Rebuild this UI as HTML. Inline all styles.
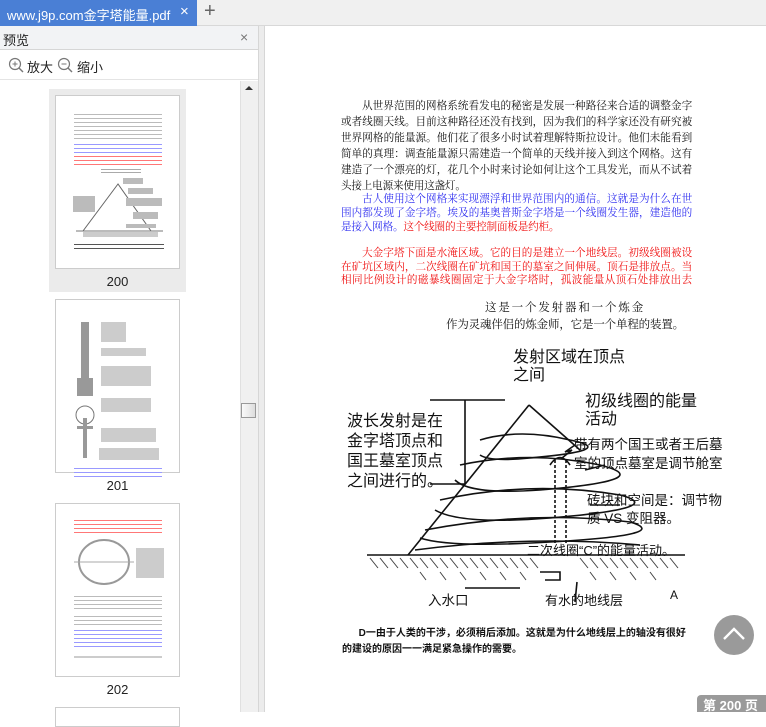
<!DOCTYPE html>
<html><head><meta charset="utf-8"><style>
*{margin:0;padding:0;box-sizing:border-box}
body{width:766px;height:712px;overflow:hidden;background:#fff;font-family:"Liberation Sans","Noto Sans CJK SC",sans-serif;position:relative}
.a{position:absolute}
.l{position:absolute;left:341px;width:351px;font-family:"Liberation Serif","Noto Serif CJK SC",serif;font-size:10.6px;letter-spacing:-0.2px;line-height:16px;height:16px;text-align:justify;text-align-last:justify;overflow:hidden;color:#111}
.i{left:362px;width:330px}
.b{color:#3030f0}.r{color:#f01010}
.d{font-family:"Liberation Sans","Noto Sans CJK SC",sans-serif;font-size:16px;line-height:20px;color:#111;position:absolute;white-space:nowrap}
.th{position:absolute;left:55px;width:125px;background:#fff;border:1px solid #ccc}
.tl{position:absolute;height:1px}
.lab{position:absolute;left:55px;width:125px;text-align:center;font-size:13px;color:#222}
</style></head><body>
<div class="a" style="left:0;top:0;width:766px;height:26px;background:#f0f0f0;border-bottom:1px solid #d8d8d8"></div>
<div class="a" style="left:0;top:0;width:197px;height:26px;background:#4a7fd5"></div>
<div class="a" style="left:7px;top:5px;font-size:13px;color:#fff;white-space:nowrap">www.j9p.com金字塔能量.pdf</div>
<div class="a" style="left:180px;top:3px;font-size:15px;color:#fff">×</div>
<div class="a" style="left:204px;top:0px;font-size:20px;color:#666">+</div>
<div class="a" style="left:0;top:26px;width:258px;height:24px;background:#f2f3f5;border-bottom:1px solid #d6d6d6"></div>
<div class="a" style="left:3px;top:30px;font-size:13px;color:#222">预览</div>
<div class="a" style="left:240px;top:29px;font-size:14px;color:#777">×</div>
<div class="a" style="left:0;top:50px;width:258px;height:30px;background:#fff;border-bottom:1px solid #e4e4e4"></div>
<svg class="a" style="left:8px;top:57px" width="16" height="16"><circle cx="7" cy="7" r="5.5" fill="none" stroke="#777" stroke-width="1.2"/><line x1="11" y1="11" x2="15" y2="15" stroke="#777" stroke-width="1.4"/><line x1="4.5" y1="7" x2="9.5" y2="7" stroke="#777"/><line x1="7" y1="4.5" x2="7" y2="9.5" stroke="#777"/></svg>
<div class="a" style="left:27px;top:57px;font-size:13px;color:#222">放大</div>
<svg class="a" style="left:57px;top:57px" width="16" height="16"><circle cx="7" cy="7" r="5.5" fill="none" stroke="#777" stroke-width="1.2"/><line x1="11" y1="11" x2="15" y2="15" stroke="#777" stroke-width="1.4"/><line x1="4.5" y1="7" x2="9.5" y2="7" stroke="#777"/></svg>
<div class="a" style="left:77px;top:57px;font-size:13px;color:#222">缩小</div>
<div class="a" style="left:240px;top:81px;width:18px;height:631px;background:#f0f0f0;border-left:1px solid #e0e0e0"></div>
<div class="a" style="left:245px;top:86px;width:0;height:0;border-left:4px solid transparent;border-right:4px solid transparent;border-bottom:4px solid #333"></div>
<div class="a" style="left:241px;top:403px;width:15px;height:15px;background:linear-gradient(90deg,#fafafa,#ddd);border:1px solid #999"></div>
<div class="a" style="left:258px;top:26px;width:7px;height:686px;background:#ececec;border-left:1px solid #d6d6d6;border-right:1px solid #d6d6d6"></div>
<div class="a" style="left:49px;top:89px;width:137px;height:203px;background:#ebebeb"></div>
<div class="th" style="top:95px;height:174px">
 <div class="tl" style="left:18px;top:18px;width:88px;height:26px;background:repeating-linear-gradient(#bbb 0 1px,transparent 1px 4px)"></div>
 <div class="tl" style="left:18px;top:48px;width:88px;height:10px;background:repeating-linear-gradient(#99f 0 1px,transparent 1px 4px)"></div>
 <div class="tl" style="left:18px;top:60px;width:88px;height:10px;background:repeating-linear-gradient(#f77 0 1px,transparent 1px 4px)"></div>
 <div class="tl" style="left:45px;top:73px;width:40px;height:6px;background:repeating-linear-gradient(#aaa 0 1px,transparent 1px 3px)"></div>
 <svg class="a" style="left:15px;top:80px" width="95" height="65"><polygon points="47,8 12,55 80,55" fill="none" stroke="#666"/><line x1="5" y1="55" x2="92" y2="55" stroke="#777"/><g fill="#bbb"><rect x="2" y="20" width="22" height="16"/><rect x="52" y="2" width="20" height="6"/><rect x="57" y="12" width="25" height="6"/><rect x="55" y="22" width="36" height="8"/><rect x="62" y="36" width="25" height="7"/><rect x="55" y="48" width="30" height="4"/></g><rect x="12" y="56" width="75" height="5" fill="#ccc"/></svg>
 <div class="tl" style="left:18px;top:148px;width:90px;height:8px;background:repeating-linear-gradient(#555 0 1px,transparent 1px 4px)"></div>
</div>
<div class="lab" style="top:274px">200</div>
<div class="th" style="top:299px;height:174px">
 <svg class="a" style="left:15px;top:18px" width="95" height="150"><g fill="#999"><rect x="10" y="4" width="8" height="60"/><rect x="6" y="60" width="16" height="18"/><circle cx="14" cy="97" r="9" fill="none" stroke="#777"/><rect x="12" y="100" width="4" height="40"/><rect x="6" y="108" width="16" height="3"/></g><g fill="#ccc"><rect x="30" y="4" width="25" height="20"/><rect x="30" y="30" width="45" height="8"/><rect x="30" y="48" width="50" height="20"/><rect x="30" y="80" width="50" height="14"/><rect x="30" y="110" width="55" height="14"/><rect x="28" y="130" width="60" height="12"/></g></svg>
 <div class="tl" style="left:18px;top:168px;width:88px;height:10px;background:repeating-linear-gradient(#99f 0 1px,transparent 1px 4px)"></div>
</div>
<div class="lab" style="top:478px">201</div>
<div class="th" style="top:503px;height:174px">
 <div class="tl" style="left:18px;top:16px;width:88px;height:14px;background:repeating-linear-gradient(#f77 0 1px,transparent 1px 4px)"></div>
 <svg class="a" style="left:18px;top:34px" width="92" height="50"><ellipse cx="30" cy="24" rx="25" ry="22" fill="none" stroke="#999" stroke-width="2"/><line x1="0" y1="24" x2="60" y2="24" stroke="#aaa"/><g fill="#ccc"><rect x="62" y="10" width="28" height="30"/></g></svg>
 <div class="tl" style="left:18px;top:92px;width:88px;height:14px;background:repeating-linear-gradient(#bbb 0 1px,transparent 1px 4px)"></div>
 <div class="tl" style="left:18px;top:112px;width:88px;height:10px;background:repeating-linear-gradient(#bbb 0 1px,transparent 1px 4px)"></div>
 <div class="tl" style="left:18px;top:126px;width:88px;height:20px;background:repeating-linear-gradient(#99f 0 1px,transparent 1px 4px)"></div>
 <div class="tl" style="left:18px;top:152px;width:88px;height:2px;background:#ccc"></div>
</div>
<div class="lab" style="top:682px">202</div>
<div class="th" style="top:707px;height:20px"></div>
<div class="l i" style="top:99px">从世界范围的网格系统看发电的秘密是发展一种路径来合适的调整金字塔</div>
<div class="l" style="top:115px">或者线圈天线。目前这种路径还没有找到，因为我们的科学家还没有研究被称为</div>
<div class="l" style="top:131px">世界网格的能量源。他们花了很多小时试着理解特斯拉设计。他们未能看到一个</div>
<div class="l" style="top:147px">简单的真理：调查能量源只需建造一个简单的天线并接入到这个网格。这有点像</div>
<div class="l" style="top:163px">建造了一个漂亮的灯，花几个小时来讨论如何让这个工具发光，而从不试着将插</div>
<div class="l" style="top:179px;text-align-last:left">头接上电源来使用这盏灯。</div>
<div class="l i b" style="top:192px">古人使用这个网格来实现漂浮和世界范围内的通信。这就是为什么在世界范</div>
<div class="l b" style="top:206px">围内都发现了金字塔。埃及的基奥普斯金字塔是一个线圈发生器，建造他的目的</div>
<div class="l b" style="top:220px;text-align-last:left">是接入网格。<span class="r">这个线圈的主要控制面板是约柜。</span></div>
<div class="l i r" style="top:246px">大金字塔下面是水淹区域。它的目的是建立一个地线层。初级线圈被设计</div>
<div class="l r" style="top:260px">在矿坑区域内，二次线圈在矿坑和国王的墓室之间伸展。顶石是排放点。当以</div>
<div class="l r" style="top:273px">相同比例设计的磁暴线圈固定于大金字塔时，孤波能量从顶石处排放出去了。</div>
<div class="l" style="top:300px;left:485px;width:158px;font-size:11.5px">这是一个发射器和一个炼金师，</div>
<div class="l" style="top:317px;left:446px;width:238px;font-size:11.5px">作为灵魂伴侣的炼金师，它是一个单程的装置。</div>
<svg class="a" style="left:330px;top:340px" width="400" height="280">
<g stroke="#111" fill="none" stroke-width="1.6">
<path d="M199 65 L78 215"/><path d="M199 65 L250 110"/>
<path d="M37 215 L355 215"/>
<path d="M100 60 L175 60 M135 60 L135 144 M100 144 L135 144"/>
<path d="M245 105 L235 112 L242 110 L232 118"/>
<path d="M150 100 Q190 88 240 100 Q290 110 200 118 Q160 122 150 115"/>
<path d="M130 125 Q200 110 270 125 Q330 140 210 150 Q140 155 125 140"/>
<path d="M110 160 Q200 140 290 155 Q340 168 220 178 Q130 185 105 170"/>
<path d="M95 190 Q200 170 300 182 Q345 195 220 202 Q120 208 90 198"/>
<path d="M85 210 Q200 195 310 205"/>
<path d="M225 120 L225 205 M236 120 L236 205" stroke-dasharray="3 2"/>
<path d="M220 125 Q230 110 240 125"/>
<path d="M255 130 L275 125 M260 165 L290 165"/>
<path d="M210 232 L230 232 L230 240 L215 240"/>
<path d="M135 248 L190 248"/>
<path d="M247 242 L245 262"/>
</g>
<g stroke="#444" stroke-width="1">
<path d="M40 218 l8 10 M50 218 l8 10 M60 218 l8 10 M70 218 l8 10 M80 218 l8 10 M90 218 l8 10 M100 218 l8 10 M110 218 l8 10 M120 218 l8 10 M130 218 l8 10 M140 218 l8 10 M150 218 l8 10 M160 218 l8 10 M170 218 l8 10 M180 218 l8 10 M190 218 l8 10 M200 218 l8 10 M250 218 l8 10 M260 218 l8 10 M270 218 l8 10 M280 218 l8 10 M290 218 l8 10 M300 218 l8 10 M310 218 l8 10 M320 218 l8 10 M330 218 l8 10 M340 218 l8 10"/>
<path d="M90 232 l6 8 M110 232 l6 8 M130 232 l6 8 M150 232 l6 8 M170 232 l6 8 M190 232 l6 8 M260 232 l6 8 M280 232 l6 8 M300 232 l6 8 M320 232 l6 8"/>
</g>
</svg>
<div class="d" style="left:513px;top:348px">发射区域在顶点</div>
<div class="d" style="left:513px;top:366px">之间</div>
<div class="d" style="left:585px;top:392px">初级线圈的能量</div>
<div class="d" style="left:585px;top:410px">活动</div>
<div class="d" style="left:347px;top:412px">波长发射是在</div>
<div class="d" style="left:347px;top:432px">金字塔顶点和</div>
<div class="d" style="left:347px;top:452px">国王墓室顶点</div>
<div class="d" style="left:347px;top:472px">之间进行的。</div>
<div class="d" style="left:574px;top:435px;font-size:13.5px">带有两个国王或者王后墓</div>
<div class="d" style="left:574px;top:454px;font-size:13.5px">室的顶点墓室是调节舱室</div>
<div class="d" style="left:587px;top:491px;font-size:13.5px">砖块和空间是：调节物</div>
<div class="d" style="left:587px;top:509px;font-size:13.5px">质 VS 变阻器。</div>
<div class="d" style="left:527px;top:541px;font-size:13px">二次线圈“C”的能量活动。</div>
<div class="d" style="left:428px;top:591px;font-size:13.5px">入水口</div>
<div class="d" style="left:545px;top:591px;font-size:13px">有水的地线层</div>
<div class="d" style="left:670px;top:585px;font-size:12px">A</div>
<div class="a" style="left:342px;top:626px;font-size:10px;font-weight:bold;color:#111;line-height:16px;white-space:nowrap">&nbsp;&nbsp;&nbsp;&nbsp;&nbsp;&nbsp;D一由于人类的干涉，必须稍后添加。这就是为什么地线层上的轴没有很好<br>的建设的原因一一满足紧急操作的需要。</div>
<div class="a" style="left:714px;top:615px;width:40px;height:40px;border-radius:50%;background:#9a9a9a"></div>
<svg class="a" style="left:714px;top:615px" width="40" height="40"><path d="M10 24 L20 14 L30 24" fill="none" stroke="#fff" stroke-width="2.4"/></svg>
<div class="a" style="left:697px;top:695px;width:69px;height:17px;background:#9a9a9a;border-radius:4px 0 0 0;color:#fff;font-size:13px;font-weight:bold;padding:4px 0 0 6px;line-height:13px">第 200 页</div>
</body></html>
